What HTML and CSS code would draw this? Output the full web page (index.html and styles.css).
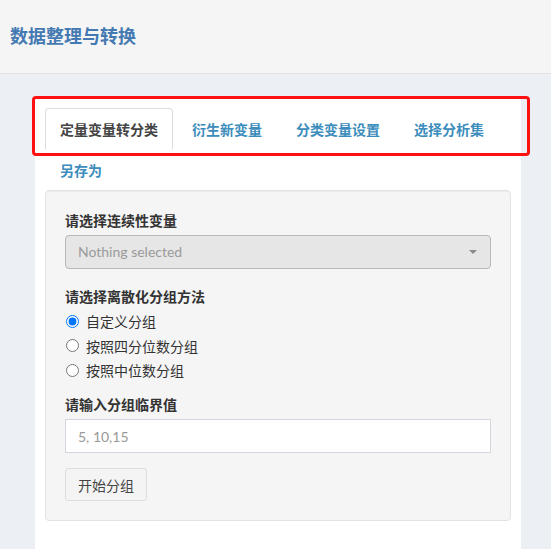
FILE: index.html
```html
<!DOCTYPE html>
<html lang="zh">
<head>
<meta charset="utf-8">
<title>数据整理与转换</title>
<link rel="stylesheet" href="styles.css">
</head>
<body>
<header class="top">
  <h1 class="title">数据整理与转换</h1>
</header>
<main class="main">
  <section class="panel">
    <ul class="tabs">
      <li class="tab active"><a>定量变量转分类</a></li>
      <li class="tab"><a>衍生新变量</a></li>
      <li class="tab"><a>分类变量设置</a></li>
      <li class="tab"><a>选择分析集</a></li>
      <li class="tab"><a>另存为</a></li>
    </ul>
    <div class="well">
      <div class="label">请选择连续性变量</div>
      <div class="select">
        <span class="select-text">Nothing selected</span>
        <span class="caret"></span>
      </div>
      <div class="label label-gap">请选择离散化分组方法</div>
      <div class="radios">
        <label class="radio"><input type="radio" name="m" checked><span>自定义分组</span></label>
        <label class="radio"><input type="radio" name="m"><span>按照四分位数分组</span></label>
        <label class="radio"><input type="radio" name="m"><span>按照中位数分组</span></label>
      </div>
      <div class="label label-gap2">请输入分组临界值</div>
      <input class="text-input" type="text" placeholder="5, 10,15">
      <button class="btn" type="button">开始分组</button>
    </div>
  </section>
</main>
<div class="highlight"></div>
</body>
</html>
```

FILE: styles.css
```css
* { box-sizing: border-box; }
html, body { margin: 0; padding: 0; }
body {
  background: #ecf0f5;
  font-family: Lato, "Noto Sans CJK SC", sans-serif;
  font-size: 14px;
  line-height: 20px;
  color: #333;
  height: 549px;
  overflow: hidden;
  position: relative;
}
.top {
  height: 74px;
  background: #f5f5f5;
  border-bottom: 1px solid #e2e2e2;
  display: flex;
  align-items: center;
  padding: 0 10px 3px;
}
.title {
  margin: 0;
  font-family: "Noto Sans CJK SC", sans-serif;
  font-size: 18px;
  font-weight: bold;
  line-height: 24px;
  color: #4479b2;
}
.main {
  padding: 23px 30px 0 35px;
}
.panel {
  background: #fff;
  padding: 11px 10px 40px;
  min-height: 500px;
}
.tabs {
  list-style: none;
  margin: 0;
  padding: 0;
  display: flex;
  flex-wrap: wrap;
}
.tab {
  margin: 0 4px -1px 0;
}
.tab a {
  display: block;
  padding: 10px 14px;
  line-height: 20px;
  border: 1px solid transparent;
  border-radius: 4px 4px 0 0;
  color: #3c8dbc;
  font-family: "Noto Sans CJK SC", sans-serif;
  font-size: 14px;
  font-weight: bold;
}
.tab.active a {
  background: #fff;
  color: #444;
  border-color: #ddd #ddd transparent;
}
.well {
  background: #f5f5f5;
  border: 1px solid #e3e3e3;
  border-radius: 4px;
  padding: 19px;
  box-shadow: inset 0 1px 1px rgba(0,0,0,0.05);
  display: flex;
  flex-direction: column;
  align-items: stretch;
}
.label {
  font-weight: bold;
  font-family: "Noto Sans CJK SC", sans-serif;
  line-height: 20px;
  height: 20px;
  margin-bottom: 5px;
  color: #333;
}
.label-gap { margin-top: 17px; }
.label-gap2 { margin-top: 14px; }
.select {
  height: 34px;
  flex: none;
  border: 1px solid #b9b9b9;
  border-radius: 4px;
  background: #e6e6e6;
  display: flex;
  align-items: center;
  justify-content: space-between;
  padding: 0 13px 0 12px;
}
.select-text {
  color: #9a9a9a;
  font-family: Lato, sans-serif;
}
.caret {
  width: 0;
  height: 0;
  border-left: 4px solid transparent;
  border-right: 4px solid transparent;
  border-top: 4px solid #8a8a8a;
}
.radios {
  display: flex;
  flex-direction: column;
  gap: 4.5px;
}
.radio {
  display: flex;
  align-items: center;
  gap: 7px;
  height: 20px;
  flex: none;
  font-family: "Noto Sans CJK SC", sans-serif;
  color: #333;
}
.radio input {
  margin: 0 0 0 1px;
  width: 13px;
  height: 13px;
}
.text-input {
  height: 34px;
  flex: none;
  border: 1px solid #d2d6de;
  border-radius: 0;
  background: #fff;
  padding: 0 12px;
  font-family: Lato, sans-serif;
  font-size: 14px;
  color: #555;
  outline: none;
}
.text-input::placeholder { color: #999; }
.btn {
  align-self: flex-start;
  flex: none;
  margin-top: 15px;
  height: 33px;
  padding: 0 12px;
  background: #f4f4f4;
  border: 1px solid #ddd;
  border-radius: 3px;
  color: #444;
  font-family: "Noto Sans CJK SC", sans-serif;
  font-size: 14px;
  line-height: 20px;
}
.highlight {
  position: absolute;
  left: 32px;
  top: 96px;
  width: 498px;
  height: 60px;
  border: 3px solid #ff1111;
  border-radius: 4px;
  pointer-events: none;
}
```
